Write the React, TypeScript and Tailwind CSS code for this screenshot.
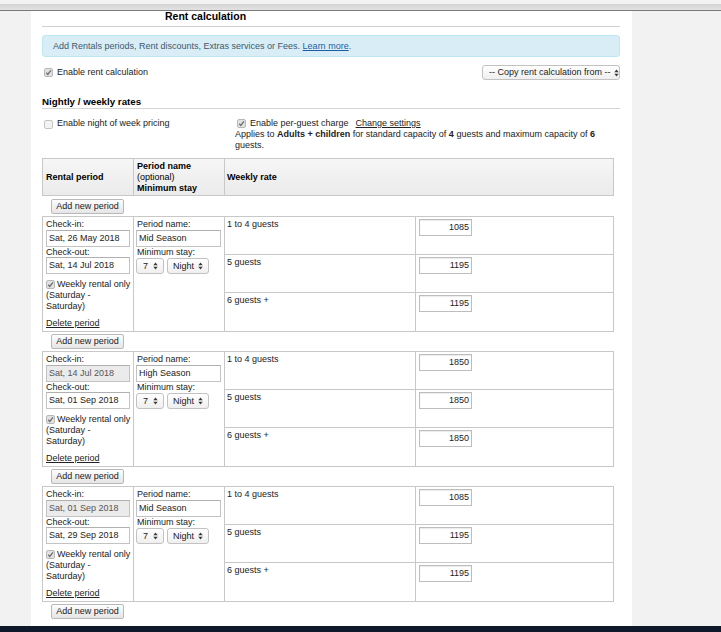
import React from "react";

const Check = ({ checked }: { checked: boolean }) => (
  <span
    className={
      "inline-flex h-[9px] w-[9px] shrink-0 items-center justify-center rounded-[2px] border " +
      (checked ? "border-[#b8b8b8] bg-[#e2e2e2]" : "border-[#c4c4c4] bg-[#f3f3f3]")
    }
  >
    {checked && (
      <svg width="7" height="7" viewBox="0 0 7 7">
        <path d="M1.2 3.8 L2.8 5.4 L5.9 1.4" stroke="#6e6e6e" strokeWidth="1.3" fill="none" />
      </svg>
    )}
  </span>
);

const Arrows = () => (
  <svg width="5" height="8" viewBox="0 0 5 8" className="shrink-0">
    <path d="M0.3 3.3 L2.5 0.4 L4.7 3.3 Z" fill="#3a3a3a" />
    <path d="M0.3 4.7 L2.5 7.6 L4.7 4.7 Z" fill="#3a3a3a" />
  </svg>
);

const Btn = ({ first }: { first?: boolean }) => (
  <div className={first ? "mt-[3px] mb-[2px] pl-[9px]" : "my-[2px] pl-[9px]"}>
    <div className="flex h-[15px] w-[73px] items-center justify-center whitespace-nowrap rounded-[2px] border border-[#b9b9b9] bg-gradient-to-b from-[#fdfdfd] to-[#e5e5e5] text-[#222]">
      Add new period
    </div>
  </div>
);

type Period = {
  checkIn: string;
  checkOut: string;
  disabled: boolean;
  name: string;
  rates: string[];
};

const periods: Period[] = [
  { checkIn: "Sat, 26 May 2018", checkOut: "Sat, 14 Jul 2018", disabled: false, name: "Mid Season", rates: ["1085", "1195", "1195"] },
  { checkIn: "Sat, 14 Jul 2018", checkOut: "Sat, 01 Sep 2018", disabled: true, name: "High Season", rates: ["1850", "1850", "1850"] },
  { checkIn: "Sat, 01 Sep 2018", checkOut: "Sat, 29 Sep 2018", disabled: true, name: "Mid Season", rates: ["1085", "1195", "1195"] },
];

const guests = ["1 to 4 guests", "5 guests", "6 guests +"];

const TextInput = ({ value, disabled, w }: { value: string; disabled?: boolean; w: string }) => (
  <div
    className={
      "flex h-[17px] items-center whitespace-nowrap border border-[#c3c3c3] border-t-[#b0b0b0] pl-[2px] " +
      w +
      (disabled ? " bg-[#ebebeb] text-[#555]" : " bg-white text-[#222]")
    }
  >
    {value}
  </div>
);

const PeriodTable = ({ p }: { p: Period }) => (
  <div className="flex h-[116px] w-[572px] border border-[#c8c8c8]">
    <div className="flex w-[91px] flex-col border-r border-[#c8c8c8] pl-[3px] pt-[2px]">
      <div className="h-[11px]">Check-in:</div>
      <TextInput value={p.checkIn} disabled={p.disabled} w="w-[84px]" />
      <div className="h-[10px] leading-[10px]">Check-out:</div>
      <TextInput value={p.checkOut} w="w-[84px]" />
      <div className="mt-[5px] flex items-center gap-[2px] whitespace-nowrap">
        <Check checked />
        <span>Weekly rental only</span>
      </div>
      <div>(Saturday -</div>
      <div>Saturday)</div>
      <div className="mt-[6px]">
        <span className="underline">Delete period</span>
      </div>
    </div>
    <div className="flex w-[91px] flex-col border-r border-[#c8c8c8] pl-[2px] pt-[2px]">
      <div className="h-[11px] pl-[1px]">Period name:</div>
      <TextInput value={p.name} w="w-[85px]" />
      <div className="h-[10px] pl-[1px] leading-[10px]">Minimum stay:</div>
      <div className="mt-[1px] flex gap-[3px]">
        <div className="flex h-[16px] w-[28px] items-center justify-between rounded-[3px] border border-[#c2c2c2] bg-gradient-to-b from-white to-[#efefef] pl-[6px] pr-[5px]">
          <span>7</span>
          <Arrows />
        </div>
        <div className="flex h-[16px] w-[42px] items-center justify-between rounded-[3px] border border-[#c2c2c2] bg-gradient-to-b from-white to-[#efefef] pl-[5px] pr-[5px]">
          <span>Night</span>
          <Arrows />
        </div>
      </div>
    </div>
    <div className="flex flex-1 flex-col">
      {guests.map((g, i) => (
        <div
          key={g}
          className={
            "flex " + (i < 2 ? "h-[38px] border-b border-[#c8c8c8]" : "flex-1")
          }
        >
          <div className="w-[191px] border-r border-[#c8c8c8] pl-[2px] pt-[2px]">{g}</div>
          <div className="flex-1 pl-[3px] pt-[2px]">
            <div className="flex h-[17px] w-[53px] items-center justify-end border border-[#bdbdbd] bg-white pr-[2px] shadow-[inset_0_1px_1px_rgba(0,0,0,0.08)]">
              {p.rates[i]}
            </div>
          </div>
        </div>
      ))}
    </div>
  </div>
);

export default function App() {
  return (
    <div className="flex h-[632px] w-[721px] flex-col overflow-hidden font-['Liberation_Sans',Arial,sans-serif] text-[9px] leading-[11px] text-[#222]">
      <div className="h-[4px] shrink-0 bg-[#f3f3f3]" />
      <div className="h-[7px] shrink-0 border-b border-[#7a7a7a] bg-gradient-to-b from-[#d3d3d3] to-[#e3e3e3]" />
      <div className="flex min-h-0 flex-1">
        <div className="w-[31px] shrink-0 bg-[#f2f2f2]" />
        <div className="w-[601px] shrink-0 bg-white pl-[11px] pr-[12px]">
          <div className="h-[16px] border-b border-[#cfcfcf] pl-[123px] text-[10.5px] font-bold leading-[10px] text-black">
            Rent calculation
          </div>
          <div className="mt-[8px] flex h-[22px] items-center rounded-[3px] border border-[#bce8f1] bg-[#d9edf7] pl-[10px] text-[#3c5a6b]">
            Add Rentals periods, Rent discounts, Extras services or Fees.&nbsp;
            <span className="text-[#1b5ea6] underline">Learn more</span>.
          </div>
          <div className="mt-[8px] flex h-[15px] items-center justify-between pl-[2px]">
            <div className="flex items-center gap-[4px]">
              <Check checked />
              <span>Enable rent calculation</span>
            </div>
            <div className="flex h-[15px] w-[138px] items-center justify-between gap-[3px] overflow-hidden whitespace-nowrap rounded-[3px] border border-[#c2c2c2] bg-gradient-to-b from-white to-[#efefef] pl-[6px] pr-[4px]">
              <span>-- Copy rent calculation from --</span>
              <Arrows />
            </div>
          </div>
          <div className="mt-[16px] h-[13px] border-b border-[#d4d4d4] text-[9.75px] font-bold leading-[12px] text-black">
            Nightly / weekly rates
          </div>
          <div className="mt-[9px] flex">
            <div className="flex w-[193px] items-start gap-[4px] pl-[2px] pt-[1px]">
              <span className="mt-[1px]"><Check checked={false} /></span>
              <span className="-mt-[1px]">Enable night of week pricing</span>
            </div>
            <div className="flex-1">
              <div className="flex items-center pl-[2px]">
                <Check checked />
                <span className="ml-[4px]">Enable per-guest charge</span>
                <span className="ml-[7px] underline">Change settings</span>
              </div>
              <div>
                Applies to <b>Adults + children</b> for standard capacity of <b>4</b> guests and maximum capacity of <b>6</b>
                <br />
                guests.
              </div>
            </div>
          </div>
          <div className="mt-[7px] grid h-[38px] w-[572px] grid-cols-[91px_91px_1fr] border border-[#c8c8c8] bg-gradient-to-b from-[#f6f6f6] to-[#ebebeb] font-bold text-black">
            <div className="flex items-center border-r border-[#c8c8c8] pl-[3px]">Rental period</div>
            <div className="flex flex-col justify-center border-r border-[#c8c8c8] pl-[3px]">
              <div>Period name</div>
              <div className="font-normal">(optional)</div>
              <div>Minimum stay</div>
            </div>
            <div className="flex items-center pl-[2px]">Weekly rate</div>
          </div>
          <Btn first />
          {periods.map((p, i) => (
            <React.Fragment key={i}>
              <PeriodTable p={p} />
              <Btn />
            </React.Fragment>
          ))}
        </div>
        <div className="flex-1 bg-[#f2f2f2]" />
      </div>
      <div className="h-[6px] shrink-0 bg-[#0e1a2b]" />
    </div>
  );
}
